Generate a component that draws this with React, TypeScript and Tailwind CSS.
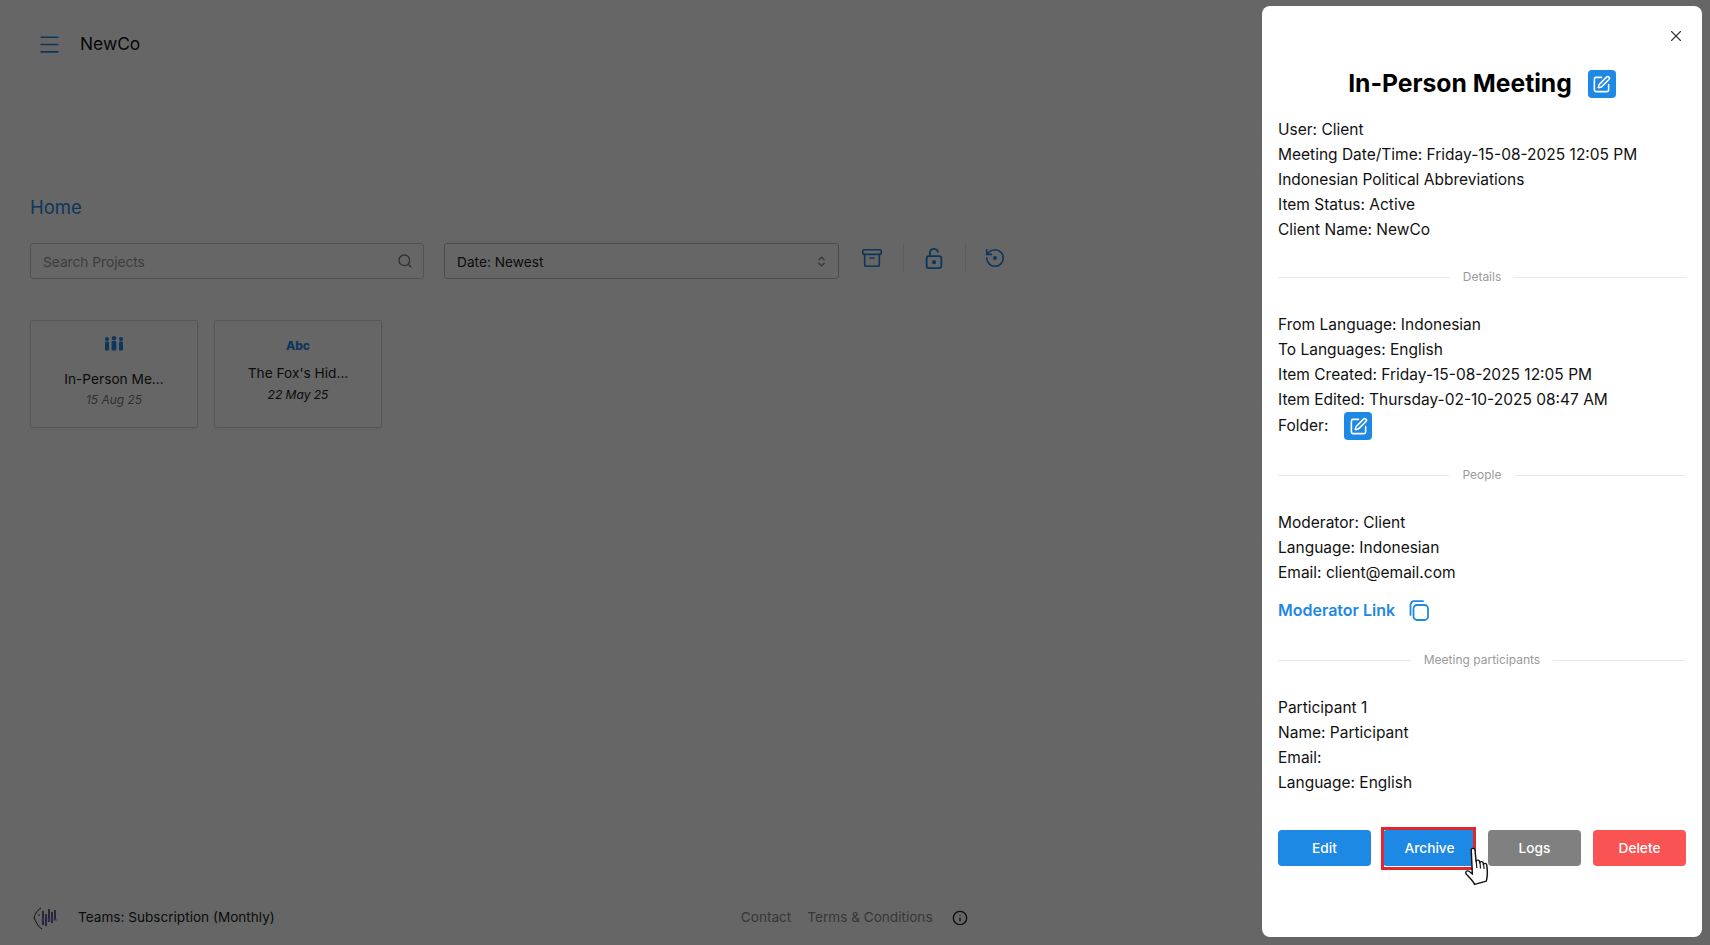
import React from "react";
import { Archive, ChevronsUpDown, Info, Menu, RotateCcw, Search, SquarePen, X } from "lucide-react";

const FONT = "font-['Inter','Liberation_Sans',sans-serif]";

// people glyph on the first project card
const PeopleIcon = () => (
  <svg width="20" height="15" viewBox="0 0 20 15" fill="#1e88e5">
    <circle cx="3" cy="3" r="2" />
    <rect x="1" y="5.5" width="4" height="9" rx="1" />
    <circle cx="10" cy="2.2" r="2.2" />
    <rect x="7.6" y="5" width="4.8" height="9.5" rx="1" />
    <circle cx="17" cy="3" r="2" />
    <rect x="15" y="5.5" width="4" height="9" rx="1" />
  </svg>
);

// footer logo
const Logo = () => (
  <svg width="26" height="24" viewBox="0 0 26 24" fill="none">
    <path d="M8 2 C3 5 2 9 1 12 C3 15 4 20 9 23" stroke="#222" strokeWidth="1" />
    <circle cx="6" cy="9" r="0.8" fill="#222" />
    <path d="M10 5v14M13 8v12M16 3v13M19 6v11M22 4v10" stroke="#3f3a80" strokeWidth="1.6" />
    <path d="M8 14h16" stroke="#9d97c9" strokeWidth="1" />
  </svg>
);

const OpenLock = () => (
  <svg width="22" height="22" viewBox="0 0 24 24" fill="none" stroke="currentColor" strokeWidth="2" strokeLinecap="round">
    <rect x="4" y="10" width="16" height="13" rx="2.5" />
    <path d="M7.500 10V6.500a4.500 4.500 0 0 1 8.800-1.300" />
    <circle cx="12" cy="16.500" r="1.300" fill="currentColor" />
  </svg>
);

const CopyIcon = () => (
  <svg width="21" height="21" viewBox="0 0 21 21" fill="none" stroke="currentColor" strokeWidth="1.800" strokeLinecap="round">
    <rect x="5.500" y="5" width="14.500" height="15" rx="3.500" />
    <path d="M2.500 15V5c0-2.300 1.600-3.800 3.800-3.800H15" />
  </svg>
);

// hand cursor from the screen recording
const HandCursor = () => (
  <svg
    width="29"
    height="39"
    viewBox="0 0 26 38"
    preserveAspectRatio="none"
    className="absolute left-[1464px] top-[847px]"
  >
    <path
      d="M6.500 3.200c0-2.400 3.200-2.400 3.400 0l.9 11c.2-2 3-2 3.200.1l.2 1.400c.1-2 3-2 3.100.2l.1 1.300c.4-1.800 2.900-1.500 3 .4.5 4.200.7 7.600.4 10.300-.2 2-.4 3.800-.8 5.400L9.500 36.500C8 33 5.500 30.500 2.600 27.200 1 25.300 1.300 23.500 3 23.200c1.300-.2 2.500.8 4.500 3.300Z"
      fill="#fff"
      stroke="#111"
      strokeWidth="1.300"
      strokeLinejoin="round"
    />
    <path d="M11 14.500l.5 6M14.400 15.800l.4 5.200M17.700 17.300l.3 4.200" stroke="#111" strokeWidth="1" fill="none" />
  </svg>
);

const Divider = ({ label }: { label: string }) => (
  <div className="flex items-center gap-[13px] h-[20px] text-[12px] text-[#9a9a9a]">
    <div className="flex-1 h-px bg-[#e8e8e8]" />
    <span>{label}</span>
    <div className="flex-1 h-px bg-[#e8e8e8]" />
  </div>
);

const Lines = ({ items }: { items: string[] }) => (
  <div className="leading-[25px]">
    {items.map((t) => (
      <div key={t}>{t}</div>
    ))}
  </div>
);

const EditSquare = () => (
  <span className="flex items-center justify-center w-[28px] h-[28px] rounded-[4px] bg-[#1e88e5]">
    <SquarePen size={19} color="#fff" strokeWidth={2} />
  </span>
);

const ProjectCard = ({
  icon,
  title,
  date,
  dim,
}: {
  icon: React.ReactNode;
  title: string;
  date: string;
  dim?: boolean;
}) => (
  <div
    className={`w-[168px] h-[108px] flex flex-col items-center border border-[#d8d8d8] rounded-[2px] shadow-[0_1px_3px_rgba(0,0,0,0.06)] ${dim ? "pt-[15px]" : "pt-[17px]"}`}
  >
    {icon}
    <div className={`text-[13.7px] leading-[20px] text-[#222] ${dim ? "mt-[18px]" : "mt-[9px]"}`}>{title}</div>
    <div className={`text-[12px] italic leading-[20px] ${dim ? "mt-[1px] text-[#777]" : "mt-[2px] text-[#222]"}`}>{date}</div>
  </div>
);

export default function App() {
  return (
    <div className={`${FONT} relative h-screen w-full overflow-hidden bg-white text-[#111]`}>
      {/* page behind the drawer */}
      <div className="flex flex-col h-full">
        <header className="flex items-center h-[88px] pl-[37px] gap-[18px] shrink-0">
          <Menu size={25} color="#1e88e5" strokeWidth={1.6} />
          <span className="text-[17.4px]">NewCo</span>
        </header>

        <main className="flex-1 pl-[30px] pt-[107px]">
          <div className="text-[18.5px] leading-[24px] text-[#1e88e5]">Home</div>

          <div className="flex items-start mt-[24px]">
            <div className="flex items-center justify-between w-[394px] h-[36px] pl-[12px] pr-[10px] border border-[#cccccc] rounded-[3px]">
              <span className="pt-[2px] text-[13.7px] text-[#9a9a9a]">Search Projects</span>
              <Search size={16} color="#777" />
            </div>
            <div className="flex items-center justify-between w-[395px] h-[36px] ml-[20px] pl-[12px] pr-[10px] border border-[#bbbbbb] rounded-[3px]">
              <span className="pt-[2px] text-[13.7px] text-[#222]">Date: Newest</span>
              <ChevronsUpDown size={13} color="#777" />
            </div>
            <div className="flex items-center ml-[22px] h-[30px] text-[#1e88e5]">
              <Archive size={22} strokeWidth={1.8} />
              <div className="w-px h-[28px] bg-[#e6e6e6] ml-[20px] mr-[19px]" />
              <OpenLock />
              <div className="w-px h-[28px] bg-[#e6e6e6] ml-[20px] mr-[18px]" />
              <RotateCcw size={22} strokeWidth={1.8}>
                <circle cx="12" cy="12" r="1.2" fill="currentColor" />
              </RotateCcw>
            </div>
          </div>

          <div className="flex gap-[16px] mt-[41px]">
            <ProjectCard icon={<PeopleIcon />} title="In-Person Me..." date="15 Aug 25" dim />
            <ProjectCard
              icon={<span className="text-[12px] leading-[16px] font-extrabold text-[#1e88e5]">Abc</span>}
              title="The Fox's Hid..."
              date="22 May 25"
            />
          </div>
        </main>

        <footer className="flex items-center h-[56px] pt-[1px] pl-[33px] shrink-0 text-[13.6px]">
          <Logo />
          <span className="ml-[19px] text-[#222]">Teams: Subscription (Monthly)</span>
          <span className="ml-[466px] text-[#8a8a8a]">Contact</span>
          <span className="ml-[16px] text-[#8a8a8a]">Terms &amp; Conditions</span>
          <Info size={16} className="ml-[19px] text-[#222]" />
        </footer>
      </div>

      {/* dimmed backdrop */}
      <div className="absolute inset-0 bg-black/60" />

      {/* drawer */}
      <aside className="absolute left-[1262px] top-[6px] bottom-[8px] w-[440px] rounded-[8px] bg-white px-[16px] text-[15.5px] text-[#111]">
        <div className="flex justify-end pt-[21px] mr-[1px]">
          <X size={18} color="#333" strokeWidth={1.5} />
        </div>
        <div className="flex items-center justify-center gap-[16px] h-[28px] mt-[25px]">
          <h1 className="text-[24.7px] font-bold text-black">In-Person Meeting</h1>
          <EditSquare />
        </div>
        <div className="mt-[19px]">
          <Lines
            items={[
              "User: Client",
              "Meeting Date/Time: Friday-15-08-2025 12:05 PM",
              "Indonesian Political Abbreviations",
              "Item Status: Active",
              "Client Name: NewCo",
            ]}
          />
        </div>

        <div className="mt-[25px]">
          <Divider label="Details" />
        </div>
        <div className="mt-[25px]">
          <Lines
            items={[
              "From Language: Indonesian",
              "To Languages: English",
              "Item Created: Friday-15-08-2025 12:05 PM",
              "Item Edited: Thursday-02-10-2025 08:47 AM",
            ]}
          />
          <div className="flex items-center gap-[16px] h-[28px]">
            <span>Folder:</span>
            <EditSquare />
          </div>
        </div>

        <div className="mt-[25px]">
          <Divider label="People" />
        </div>
        <div className="mt-[25px]">
          <Lines items={["Moderator: Client", "Language: Indonesian", "Email: client@email.com"]} />
          <div className="flex items-center gap-[13px] h-[26px] mt-[12px] text-[16px] font-semibold text-[#1e88e5]">
            <span>Moderator Link</span>
            <CopyIcon />
          </div>
        </div>

        <div className="mt-[27px]">
          <Divider label="Meeting participants" />
        </div>
        <div className="mt-[25px]">
          <Lines items={["Participant 1", "Name: Participant", "Email:", "Language: English"]} />
        </div>

        <div className="grid grid-cols-4 gap-[12px] mt-[35px] text-[13.7px] font-medium text-white">
          <button className="h-[36px] rounded-[4px] bg-[#1e88e5]">Edit</button>
          <div className="relative">
            <button className="w-full h-[36px] rounded-[4px] bg-[#1e88e5]">Archive</button>
            {/* red highlight box drawn on the recording */}
            <span className="absolute -left-[2px] -top-[3px] right-0 -bottom-[4px] border-[3px] border-[#e0272d]" />
          </div>
          <button className="h-[36px] rounded-[4px] bg-[#808080]">Logs</button>
          <button className="h-[36px] rounded-[4px] bg-[#f95353]">Delete</button>
        </div>
      </aside>

      <HandCursor />
    </div>
  );
}
